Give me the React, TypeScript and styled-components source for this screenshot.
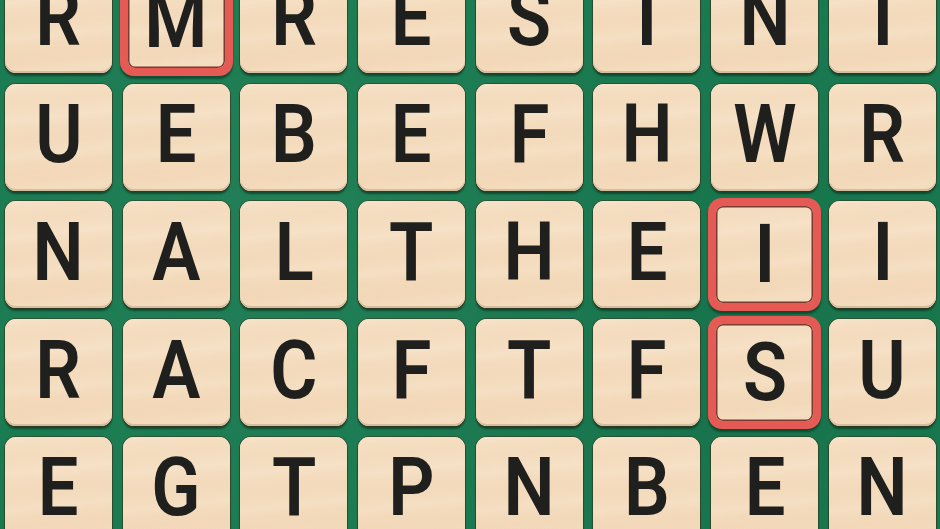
import React from 'react';
import styled, { createGlobalStyle } from 'styled-components';

const rows: string[] = ['RMRESINI', 'UEBEFHWR', 'NALTHEII', 'RACFTFSU', 'EGTPNBEN'];

// cells picked by the player, as "row-col"
const picked = new Set(['0-1', '2-6', '3-6']);

const GlobalStyle = createGlobalStyle`
  html, body {
    margin: 0;
    padding: 0;
    overflow: hidden;
  }
  body {
    font-family: Roboto, "Liberation Sans", sans-serif;
  }
`;

const App: React.FC = () => {
  return (
    <>
      <GlobalStyle />
      <Board>
        <Grid>
          {rows.map((row, r) =>
            row.split('').map((letter, c) => {
              const selected = picked.has(`${r}-${c}`);
              return (
                <Tile key={`${r}-${c}`} selected={selected}>
                  <Face selected={selected}>
                    <Letter>{letter}</Letter>
                  </Face>
                </Tile>
              );
            })
          )}
        </Grid>
      </Board>
    </>
  );
};

export default App;

const Board = styled.div`
  width: 940px;
  height: 529px;
  overflow: hidden;
  background-color: #197a50;
  background-image: radial-gradient(circle at 30% 40%, rgba(255, 255, 255, 0.04), transparent 60%),
    radial-gradient(circle at 80% 70%, rgba(0, 0, 0, 0.06), transparent 50%);
`;

const Grid = styled.div`
  display: grid;
  grid-template-columns: repeat(8, 107px);
  grid-auto-rows: 107px;
  column-gap: 10.7px;
  row-gap: 10.7px;
  margin-top: -34px;
  padding-left: 5px;
`;

const Tile = styled.div<{ selected: boolean }>`
  position: relative;
  border-radius: 11px;
  padding: ${(p) => (p.selected ? '5px' : '0')};
  background: ${(p) => (p.selected ? '#e55a55' : '#f4dcbe')};
  box-shadow: ${(p) =>
    p.selected
      ? '0 0 0 3px #e55a55, 0 3px 2px 3px rgba(10, 40, 25, 0.55)'
      : '0 0 0 1px rgba(60, 50, 30, 0.55), 0 3px 2px rgba(10, 40, 25, 0.6)'};
  display: flex;
`;

const Face = styled.div<{ selected: boolean }>`
  flex: 1;
  border-radius: ${(p) => (p.selected ? '7px' : '11px')};
  display: flex;
  align-items: center;
  justify-content: center;
  padding-bottom: ${(p) => (p.selected ? '2px' : '6px')};
  background-color: #f4dcbe;
  background-image: repeating-linear-gradient(
      -6deg,
      rgba(255, 246, 230, 0) 0px,
      rgba(255, 246, 230, 0.18) 8px,
      rgba(255, 246, 230, 0) 18px,
      rgba(235, 205, 170, 0.1) 26px,
      rgba(255, 246, 230, 0) 36px
    ),
    linear-gradient(180deg, #f5dec2, #f2d8b8);
  box-shadow: ${(p) =>
    p.selected ? 'inset 0 0 0 1.5px #7a3b30' : 'inset 0 -2px 0 rgba(150, 115, 80, 0.3)'};
`;

const Letter = styled.span`
  display: inline-block;
  font-family: Roboto, "Liberation Sans", sans-serif;
  font-weight: 600;
  font-size: 82px;
  line-height: 1;
  color: #1f1f1d;
  transform: scaleX(0.88);
`;
